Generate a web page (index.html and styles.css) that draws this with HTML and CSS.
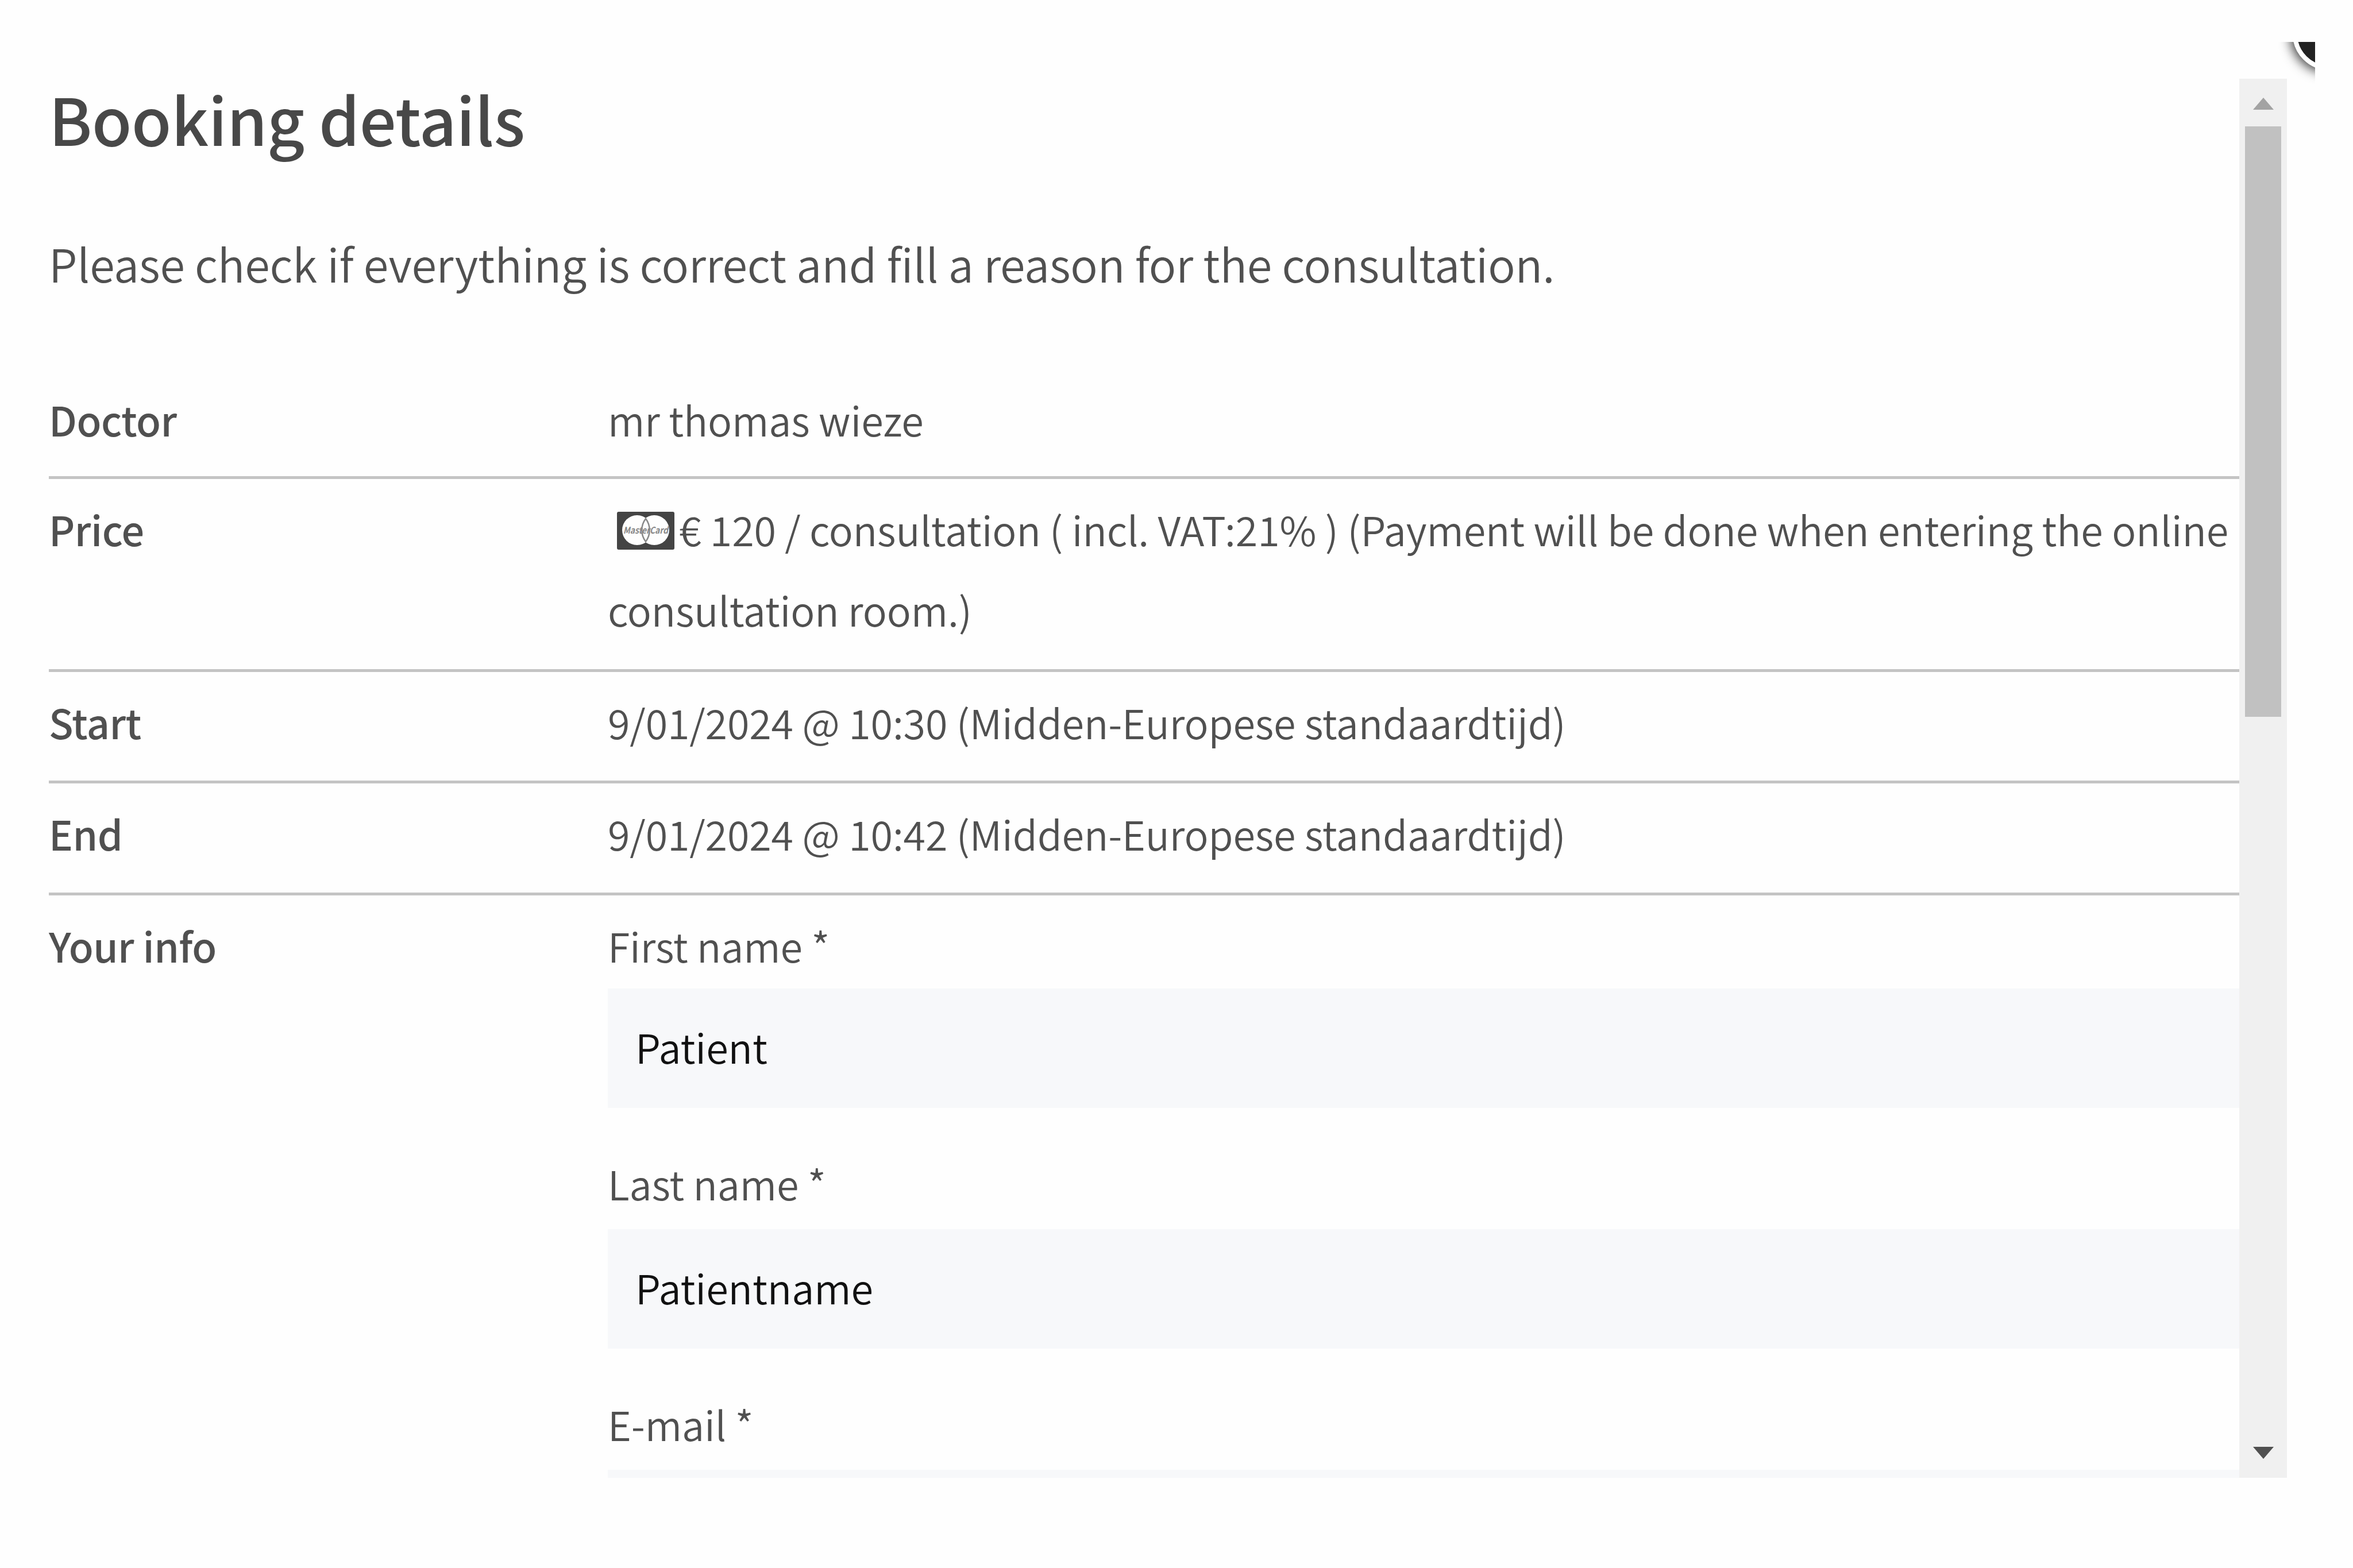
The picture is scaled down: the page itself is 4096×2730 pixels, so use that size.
FILE: index.html
```html
<!DOCTYPE html>
<html lang="en">
<head>
<meta charset="utf-8">
<title>Booking details</title>
<link rel="stylesheet" href="styles.css">
</head>
<body>
<div class="dialog">
  <div class="close-corner"><span class="close-button"></span></div>
  <main class="content">
    <h1 class="title">Booking details</h1>
    <p class="intro">Please check if everything is correct and fill a reason for the consultation.</p>
    <dl class="details">
      <div class="row row-first"><dt>Doctor</dt><dd>mr thomas wieze</dd></div>
      <div class="row row-price"><dt>Price</dt><dd><svg class="card-icon" viewBox="0 0 100 66" aria-hidden="true"><rect width="100" height="66" rx="3" fill="#444"/><ellipse cx="35" cy="32" rx="26" ry="26" fill="#fefefe"/><ellipse cx="65" cy="32" rx="26" ry="26" fill="#fefefe"/><path d="M50 12c-9 12-9 28 0 40c9-12 9-28 0-40z" fill="none" stroke="#888" stroke-width="2.5"/><text x="50" y="38" text-anchor="middle" class="card-text" textLength="78" lengthAdjust="spacingAndGlyphs">MasterCard</text></svg><span>€ 120 / consultation ( incl. VAT:21% ) (Payment will be done when entering the online</span><br>consultation room.)</dd></div>
      <div class="row"><dt>Start</dt><dd>9/01/2024 @ 10:30 (Midden-Europese standaardtijd)</dd></div>
      <div class="row"><dt>End</dt><dd>9/01/2024 @ 10:42 (Midden-Europese standaardtijd)</dd></div>
      <div class="row row-info"><dt>Your info</dt>
        <dd class="fields">
          <label class="field"><span class="label">First name *</span><input class="input" value="Patient"></label>
          <label class="field"><span class="label">Last name *</span><input class="input" value="Patientname"></label>
          <label class="field"><span class="label">E-mail *</span><input class="input"></label>
        </dd>
      </div>
    </dl>
  </main>
  <div class="scrollbar">
    <svg class="arrow" viewBox="0 0 36 21"><path d="M18 0L36 21H0z" fill="#a3a3a3"/></svg>
    <div class="thumb"></div>
    <svg class="arrow arrow-down" viewBox="0 0 36 21"><path d="M0 0H36L18 21z" fill="#505050"/></svg>
  </div>
</div>
</body>
</html>
```
FILE: styles.css
```css
* { box-sizing: border-box; }
html, body { margin: 0; }
body {
  width: 4096px;
  height: 2730px;
  overflow: hidden;
  background: #fefefe;
  color: #505050;
  font-family: "Noto Sans CJK JP", "Noto Sans", sans-serif;
  font-size: 70px;
  font-weight: 350;
  line-height: 140.5px;
}
.dialog {
  position: relative;
  display: flex;
  align-items: flex-start;
  height: 2573px;
  padding-left: 85px;
  overflow: hidden;
}
.content {
  width: 3813px;
  padding-top: 125px;
  white-space: nowrap;
}
.title {
  margin: 0;
  color: #484848;
  font-size: 113px;
  font-weight: 500;
  line-height: 160px;
  letter-spacing: -.4px;
}
.intro {
  margin: 102px 0 0;
  font-size: 79px;
  line-height: 142px;
  letter-spacing: -.17px;
}
.details { margin: 131px 0 0; }
.row {
  display: grid;
  grid-template-columns: 973px 1fr;
  padding: 17px 0 32px;
  border-bottom: 5px solid #c4c4c4;
}
.row-first { padding: 0 0 28px; }
.row-price { padding: 17px 0 33px; }
.row-info { border: 0; }
dt { font-weight: 500; letter-spacing: -.5px; }
dd { margin: 0; letter-spacing: -.11px; }
.card-icon {
  width: 100px;
  height: 66px;
  margin: 0 8px 0 16px;
  vertical-align: -6px;
}
.card-text { font-size: 16px; font-weight: 700; font-style: italic; fill: #888; }
.fields { display: grid; gap: 61px; }
.label { display: block; height: 150px; }
.field:first-child .label { height: 145px; }
.field { display: block; }
.input {
  display: block;
  width: 100%;
  height: 208px;
  padding: 0 48px 7px;
  border: 0;
  border-radius: 0;
  outline: 0;
  background: #f7f8fa;
  color: #111;
  font: inherit;
}
.scrollbar {
  display: flex;
  flex-direction: column;
  align-items: center;
  width: 83px;
  height: 2436px;
  margin-top: 137px;
  padding: 33px 0;
  background: #f0f0f0;
}
.arrow { display: block; width: 36px; height: 21px; }
.thumb {
  width: 63px;
  height: 1028px;
  margin-top: 29px;
  background: #c1c1c1;
}
.arrow-down { margin-top: auto; }
.close-corner {
  position: absolute;
  top: 73px;
  left: 3900px;
  width: 130px;
  height: 120px;
  overflow: hidden;
}
.close-button {
  position: absolute;
  left: 91px;
  top: -77px;
  width: 126px;
  height: 126px;
  border: 8px solid #fff;
  border-radius: 50%;
  background: #222;
  box-shadow: 0 0 20px 4px rgba(0, 0, 0, .8);
}
```
